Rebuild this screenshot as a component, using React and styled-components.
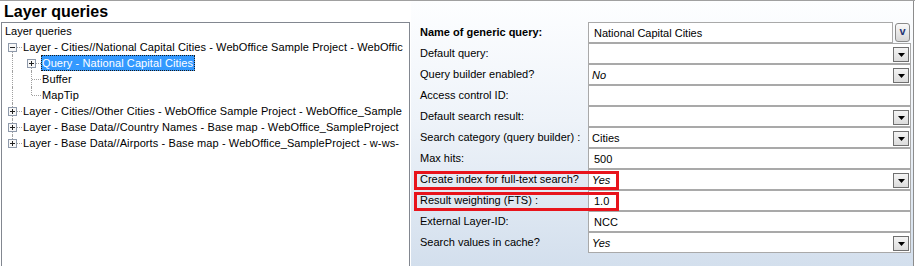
import React from "react";
import styled, { createGlobalStyle } from "styled-components";

const GlobalStyle = createGlobalStyle`
  html, body {
    margin: 0;
    padding: 0;
    background: #fff;
  }
  body {
    font-family: "Liberation Sans", Arial, sans-serif;
    font-size: 11px;
    color: #000;
  }
`;

const Frame = styled.div`
  display: flex;
  width: 915px;
  height: 266px;
  box-sizing: border-box;
  border-top: 1px solid #a0a0a0;
  overflow: hidden;
`;

const LeftColumn = styled.div`
  display: flex;
  flex-direction: column;
  flex: 0 0 411px;
`;

const Title = styled.h1`
  margin: 0;
  padding-left: 4px;
  height: 21px;
  line-height: 21px;
  font-size: 16px;
  font-weight: bold;
  white-space: nowrap;
`;

const TreeBox = styled.div`
  flex: 1;
  width: 409px;
  margin-left: 1px;
  box-sizing: border-box;
  border: 1px solid #828790;
  border-bottom: none;
  background: #fff;
  padding-left: 1px;
  overflow: hidden;
`;

const TreeRow = styled.div`
  display: flex;
  height: 16px;
  white-space: nowrap;
`;

const RootLabel = styled.span`
  padding-left: 2px;
  line-height: 16px;
`;

const Guide = styled.span`
  position: relative;
  flex: 0 0 19px;
  height: 16px;
  box-sizing: border-box;
  display: flex;
  justify-content: center;
  align-items: flex-start;
  padding-top: 4px;

  &::before {
    content: "";
    display: ${(p) => (p.$v ? "block" : "none")};
    position: absolute;
    left: 9px;
    top: ${(p) => (p.$v === "down" ? "8px" : "0")};
    bottom: ${(p) => (p.$v === "up" ? "8px" : "0")};
    border-left: 1px dotted #a0a0a0;
  }

  &::after {
    content: "";
    display: ${(p) => (p.$h ? "block" : "none")};
    position: absolute;
    left: 10px;
    right: 0;
    top: 8px;
    border-top: 1px dotted #a0a0a0;
  }

  svg {
    position: relative;
    z-index: 1;
    display: block;
  }
`;

const NodeLabel = styled.span`
  height: 16px;
  line-height: 16px;
  padding: 0 2px 0 1px;
  box-sizing: border-box;
  letter-spacing: 0.1px;
  color: ${(p) => (p.$selected ? "#fff" : "#000")};
  background: ${(p) => (p.$selected ? "#3399ff" : "transparent")};
  outline: ${(p) => (p.$selected ? "1px dotted #1a1a1a" : "none")};
  outline-offset: -1px;
`;

const PropertyPanel = styled.div`
  flex: 0 0 503px;
  box-sizing: border-box;
  border-right: 1px solid #8c8c8c;
  padding: 21px 2px 0 0;
  background: linear-gradient(180deg, #fdfeff 0%, #eef3f9 45%, #d3dfed 100%);
`;

const PropRow = styled.div`
  position: relative;
  display: grid;
  grid-template-columns: 177px 323px;
  height: 21px;
`;

const PropLabel = styled.div`
  padding-left: 9px;
  line-height: 21px;
  white-space: nowrap;
  font-weight: ${(p) => (p.$bold ? "bold" : "normal")};
`;

const ValueWrap = styled.div`
  display: flex;
  align-items: flex-start;
`;

const ValueCell = styled.div`
  flex: ${(p) => (p.$narrow ? "0 0 305px" : "1")};
  display: flex;
  align-items: center;
  height: 21px;
  box-sizing: border-box;
  border: 1px solid #a9a9a9;
  background: #fff;
  padding-left: ${(p) => (p.$combo ? "3px" : "5px")};
`;

const ValueText = styled.span`
  flex: 1;
  font-style: ${(p) => (p.$italic ? "italic" : "normal")};
  white-space: nowrap;
`;

const DropButton = styled.span`
  display: flex;
  align-items: center;
  justify-content: center;
  width: 16px;
  height: 15px;
  margin: 2px 1px 0 0;
  box-sizing: border-box;
  border: 1px solid #707070;
  background: linear-gradient(180deg, #f4f4f4, #dcdcdc);
`;

const EditorButton = styled.span`
  display: flex;
  align-items: center;
  justify-content: center;
  width: 15px;
  height: 19px;
  margin: 1px 0 0 2px;
  box-sizing: border-box;
  border: 1px solid #8a8a8a;
  border-radius: 3px;
  background: linear-gradient(180deg, #fafafa, #d6d6d6);
  color: #1f3373;
  font-weight: bold;
  font-size: 11px;
  line-height: 1;
  padding-bottom: 2px;
`;

const Highlight = styled.span`
  position: absolute;
  left: 3px;
  top: 2px;
  width: 205px;
  height: 19px;
  box-sizing: border-box;
  border: 3px solid #e8141c;
  pointer-events: none;
`;

const Expander = ({ plus }) => (
  <svg width="9" height="9" viewBox="0 0 9 9">
    <rect x="0.5" y="0.5" width="8" height="8" fill="#f7f7f7" stroke="#8f9aab" />
    <path d="M2 4.5h5" stroke="#222" />
    {plus && <path d="M4.5 2v5" stroke="#222" />}
  </svg>
);

const Arrow = () => (
  <svg width="7" height="4" viewBox="0 0 7 4">
    <polygon points="0,0 7,0 3.5,4" fill="#000" />
  </svg>
);

const treeRows = [
  {
    guides: [{ v: "down", h: true, exp: "minus" }],
    label: "Layer - Cities//National Capital Cities - WebOffice Sample Project - WebOffic",
  },
  {
    guides: [{ v: "full" }, { v: "down", h: true, exp: "plus" }],
    label: "Query - National Capital Cities",
    selected: true,
  },
  { guides: [{ v: "full" }, { v: "full", h: true }], label: "Buffer" },
  { guides: [{ v: "full" }, { v: "up", h: true }], label: "MapTip" },
  {
    guides: [{ v: "full", h: true, exp: "plus" }],
    label: "Layer - Cities//Other Cities - WebOffice Sample Project - WebOffice_Sample",
  },
  {
    guides: [{ v: "full", h: true, exp: "plus" }],
    label: "Layer - Base Data//Country Names - Base map - WebOffice_SampleProject",
  },
  {
    guides: [{ v: "up", h: true, exp: "plus" }],
    label: "Layer - Base Data//Airports - Base map - WebOffice_SampleProject - w-ws-",
  },
];

const props = [
  { label: "Name of generic query:", value: "National Capital Cities", bold: true, editor: true },
  { label: "Default query:", value: "", combo: true },
  { label: "Query builder enabled?", value: "No", combo: true, italic: true },
  { label: "Access control ID:", value: "" },
  { label: "Default search result:", value: "", combo: true },
  { label: "Search category (query builder) :", value: "Cities", combo: true },
  { label: "Max hits:", value: "500" },
  { label: "Create index for full-text search?", value: "Yes", combo: true, italic: true, marked: true },
  { label: "Result weighting (FTS) :", value: "1.0", marked: true },
  { label: "External Layer-ID:", value: "NCC" },
  { label: "Search values in cache?", value: "Yes", combo: true, italic: true },
];

export default function App() {
  return (
    <>
      <GlobalStyle />
      <Frame>
        <LeftColumn>
          <Title>Layer queries</Title>
          <TreeBox>
            <TreeRow>
              <RootLabel>Layer queries</RootLabel>
            </TreeRow>
            {treeRows.map((row, i) => (
              <TreeRow key={i}>
                {row.guides.map((g, j) => (
                  <Guide key={j} $v={g.v} $h={g.h}>
                    {g.exp && <Expander plus={g.exp === "plus"} />}
                  </Guide>
                ))}
                <NodeLabel $selected={row.selected}>{row.label}</NodeLabel>
              </TreeRow>
            ))}
          </TreeBox>
        </LeftColumn>

        <PropertyPanel>
          {props.map((p, i) => (
            <PropRow key={i}>
              <PropLabel $bold={p.bold}>{p.label}</PropLabel>
              <ValueWrap>
                <ValueCell $combo={p.combo} $narrow={p.editor}>
                  <ValueText $italic={p.italic}>{p.value}</ValueText>
                  {p.combo && (
                    <DropButton>
                      <Arrow />
                    </DropButton>
                  )}
                </ValueCell>
                {p.editor && <EditorButton>v</EditorButton>}
              </ValueWrap>
              {p.marked && <Highlight />}
            </PropRow>
          ))}
        </PropertyPanel>
      </Frame>
    </>
  );
}
